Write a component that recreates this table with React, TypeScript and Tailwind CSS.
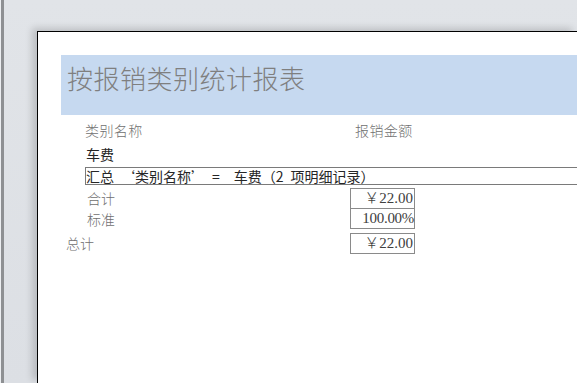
export default function App() {
  const cjk = { fontFamily: '"Noto Sans CJK SC", "Noto Sans", sans-serif' };
  const num = { fontFamily: '"Liberation Serif", "Noto Sans CJK SC", serif' };
  return (
    <div className="w-[577px] h-[383px] overflow-hidden bg-[#dfe3e8] flex" style={cjk}>
      {/* window frame edge */}
      <div className="w-[1px] bg-[#eceef1]" />
      <div className="w-[3px] bg-[#8e9093]" />
      <div className="flex-1 flex flex-col pl-[33px] pt-[31px] bg-[linear-gradient(to_bottom,#e1e4e8,#dcdfe4)]">
        {/* report page */}
        <div className="flex-1 bg-white border-l border-t border-black shadow-[-5px_-3px_7px_rgba(0,0,0,0.16)] flex flex-col">
          {/* report title band */}
          <div className="mt-[23px] ml-[23px] h-[60px] bg-[#c6d9f0] pl-[6px] pt-[8px]">
            <div className="text-[26px] leading-[30px] font-light text-[#7f7f7f] tracking-[0.5px]">按报销类别统计报表</div>
          </div>
          {/* column headers */}
          <div className="h-[30px] flex items-center text-[14px] font-light text-[#707070] tracking-[0.4px]">
            <div className="ml-[47px] w-[270px]">类别名称</div>
            <div>报销金额</div>
          </div>
          {/* group header */}
          <div className="h-[18px] flex items-center text-[14px] text-[#262626]">
            <div className="ml-[48px]">车费</div>
          </div>
          {/* group summary line */}
          <div className="mt-[4px] ml-[47px] h-[18px] border-l border-t border-b border-[#7a7a7a] flex items-center text-[14px] leading-[16px] text-[#262626] whitespace-pre">
            <span>{"汇总\u2002‘类别名称’\u2002=\u2002\u2002车费（2\u2002项明细记录）"}</span>
          </div>
          {/* subtotal rows */}
          <div className="mt-[3px] flex text-[14px] font-light text-[#707070]">
            <div className="ml-[49px] w-[263px] flex flex-col">
              <div className="h-[21px] flex items-center">合计</div>
              <div className="h-[20px] flex items-center">标准</div>
            </div>
            <div className="w-[65px] flex flex-col text-[#404040]" style={num}>
              <div className="h-[21px] border border-[#8a8a8a] flex items-center justify-end pr-[1px] text-[15px]">￥22.00</div>
              <div className="h-[20px] border-l border-r border-b border-[#8a8a8a] flex items-center justify-end text-[15px] tracking-[-0.3px]">100.00%</div>
            </div>
          </div>
          {/* grand total */}
          <div className="mt-[4px] flex text-[14px] font-light text-[#707070]">
            <div className="ml-[28px] w-[284px] h-[21px] flex items-center">总计</div>
            <div className="w-[65px] h-[21px] border border-[#8a8a8a] flex items-center justify-end pr-[1px] text-[15px] text-[#404040]" style={num}>￥22.00</div>
          </div>
        </div>
      </div>
    </div>
  );
}
